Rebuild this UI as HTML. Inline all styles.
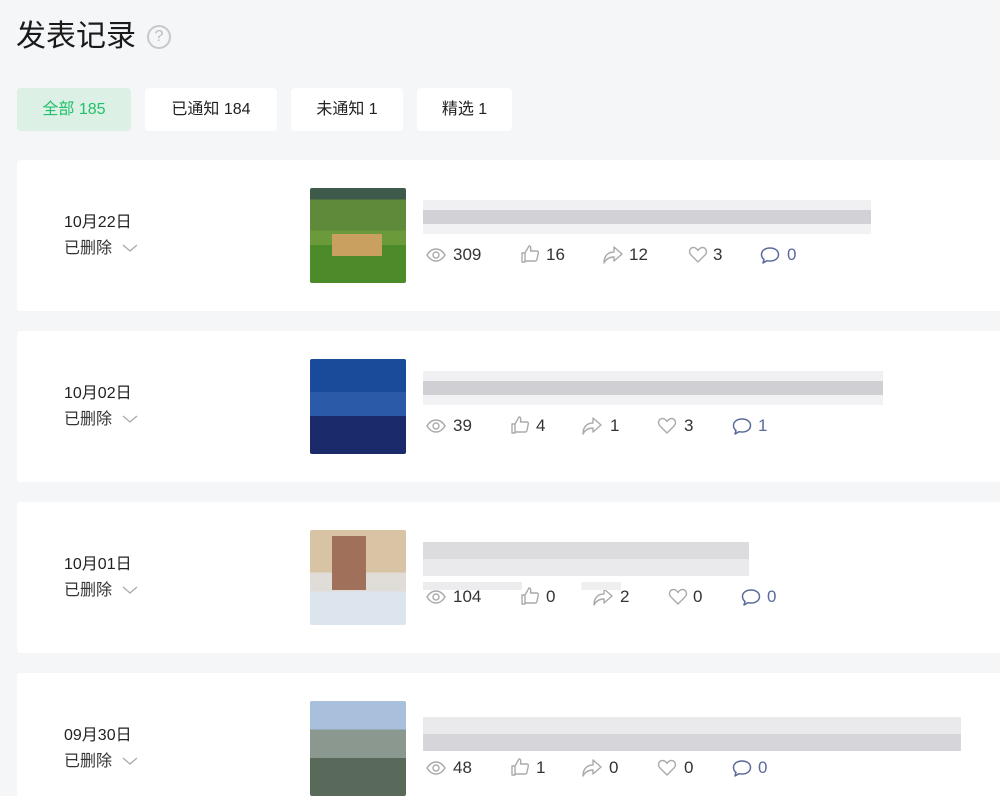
<!DOCTYPE html>
<html><head><meta charset="utf-8"><style>
*{margin:0;padding:0;box-sizing:border-box}
html,body{width:1000px;height:796px;overflow:hidden}
body{background:#f5f6f8;font-family:"Liberation Sans","Noto Sans CJK SC",sans-serif;color:#222;position:relative}
.title{position:absolute;left:16px;top:15px;font-size:30px;color:#1a1a1a;line-height:44px}
.q{position:absolute;left:147px;top:25px;width:24px;height:24px;border:2px solid #c8c8c8;border-radius:50%;color:#bbb;font-size:16px;text-align:center;line-height:20px}
.tab{position:absolute;top:88px;height:43px;background:#fff;border-radius:4px;font-size:16px;line-height:44px;text-align:center;color:#222}
.card{position:absolute;left:17px;width:990px;height:151px;background:#fff;border-radius:4px}
.date{position:absolute;left:47px;font-size:16px;line-height:22px;color:#222}
.del{position:absolute;left:47px;font-size:16px;line-height:22px;color:#333}
.del svg{position:absolute;left:58px;top:5px}
.thumb{position:absolute;left:293px;width:96px;height:95px;border-radius:2px}
.blur{position:absolute;left:406px;height:34px}
.st{position:absolute;font-size:17px;color:#333;line-height:22px}
.ic{position:absolute}
.cm{color:#5a6a9a}
</style></head><body>
<div class="title">发表记录</div><div class="q">?</div>
<div class="tab" style="left:17px;width:114px;background:#dcf0e6;color:#22c069">全部 185</div>
<div class="tab" style="left:145px;width:132px">已通知 184</div>
<div class="tab" style="left:291px;width:112px">未通知 1</div>
<div class="tab" style="left:417px;width:95px">精选 1</div>

<div class="card" style="top:160px">
<div class="date" style="top:52px">10月22日</div>
<div class="del" style="top:78px">已删除<svg width="16" height="10"><path d="M1 2l7 6 7-6" fill="none" stroke="#aaa" stroke-width="1.3"/></svg></div>
<div class="thumb" style="top:28px;background:linear-gradient(#3e5a4a 0 12%,#5e8a3a 12% 45%,#6a9a3a 45% 60%,#4c8a2a 60%)"><div style="position:absolute;left:22px;top:46px;width:50px;height:22px;background:#c9a060"></div></div>
<div class="blur" style="top:40px;width:448px;background:linear-gradient(#f0f0f2 0 30%,#d2d2d6 30% 70%,#f2f2f4 70%)"></div>
</div>
<div class="card" style="top:331px">
<div class="date" style="top:52px">10月02日</div>
<div class="del" style="top:78px">已删除<svg width="16" height="10"><path d="M1 2l7 6 7-6" fill="none" stroke="#aaa" stroke-width="1.3"/></svg></div>
<div class="thumb" style="top:28px;background:linear-gradient(#1a4a9a 0 35%,#2a5aa8 35% 60%,#1a2a6a 60%)"></div>
<div class="blur" style="top:40px;width:460px;background:linear-gradient(#f0f0f2 0 30%,#d0d0d4 30% 70%,#f2f2f4 70%)"></div>
</div>
<div class="card" style="top:502px">
<div class="date" style="top:52px">10月01日</div>
<div class="del" style="top:78px">已删除<svg width="16" height="10"><path d="M1 2l7 6 7-6" fill="none" stroke="#aaa" stroke-width="1.3"/></svg></div>
<div class="thumb" style="top:28px;background:linear-gradient(#d8c4a4 0 45%,#e0dcd8 45% 65%,#dce4ee 65%)"><div style="position:absolute;left:22px;top:6px;width:34px;height:54px;background:#a0705a"></div></div>
<div class="blur" style="top:40px;width:326px;background:linear-gradient(#dcdcde 0 50%,#eaeaec 50%)"></div>
</div>
<div class="card" style="top:673px">
<div class="date" style="top:52px">09月30日</div>
<div class="del" style="top:78px">已删除<svg width="16" height="10"><path d="M1 2l7 6 7-6" fill="none" stroke="#aaa" stroke-width="1.3"/></svg></div>
<div class="thumb" style="top:28px;background:linear-gradient(#a8c0dc 0 30%,#8a9890 30% 60%,#5a6a5a 60%)"></div>
<div class="blur" style="top:44px;width:538px;background:linear-gradient(#eaeaec 0 50%,#d6d6da 50%)"></div>
</div>

<svg width="0" height="0" style="position:absolute"><defs>
<symbol id="eye" viewBox="0 0 20 20"><path d="M1 10c3-5 6-6 9-6s6 1 9 6c-3 5-6 6-9 6s-6-1-9-6z" fill="none" stroke="#aaa" stroke-width="1.4"/><circle cx="10" cy="10" r="3" fill="none" stroke="#aaa" stroke-width="1.4"/></symbol>
<symbol id="like" viewBox="0 0 20 20"><path d="M2 9h3v9H2zM5 9l4-7c2 0 2 2 1.5 5H17c1 0 1.5 1 1.3 2l-1.5 7c-.2.8-.8 1-1.5 1H5" fill="none" stroke="#aaa" stroke-width="1.4" stroke-linejoin="round"/></symbol>
<symbol id="share" viewBox="0 0 20 20"><path d="M11 2l8 7-8 7v-4c-5 0-8 2-10 6 0-6 3-11 10-11z" fill="none" stroke="#aaa" stroke-width="1.4" stroke-linejoin="round"/></symbol>
<symbol id="heart" viewBox="0 0 20 20"><path d="M10 17L3 10C0 7 2 2.5 5.5 2.5c2 0 3.5 1.5 4.5 3 1-1.5 2.5-3 4.5-3C18 2.5 20 7 17 10z" fill="none" stroke="#aaa" stroke-width="1.4" stroke-linejoin="round"/></symbol>
<symbol id="cm" viewBox="0 0 20 20"><path d="M10 3c5 0 8.5 2.7 8.5 6.5S15 16 10 16c-1 0-2 0-3-.3L3 18l1-3.5C2.5 13.3 1.5 11.5 1.5 9.5 1.5 5.7 5 3 10 3z" fill="none" stroke="#5a6a9a" stroke-width="1.5" stroke-linejoin="round"/></symbol>
</defs></svg>

<svg class="ic" style="left:426px;top:245px" width="20" height="20"><use href="#eye"/></svg><div class="st" style="left:453px;top:244px">309</div>
<svg class="ic" style="left:520px;top:244px" width="20" height="20"><use href="#like"/></svg><div class="st" style="left:546px;top:244px">16</div>
<svg class="ic" style="left:603px;top:245px" width="20" height="20"><use href="#share"/></svg><div class="st" style="left:629px;top:244px">12</div>
<svg class="ic" style="left:688px;top:245px" width="20" height="20"><use href="#heart"/></svg><div class="st" style="left:713px;top:244px">3</div>
<svg class="ic" style="left:760px;top:245px" width="20" height="20"><use href="#cm"/></svg><div class="st cm" style="left:787px;top:244px">0</div>

<svg class="ic" style="left:426px;top:416px" width="20" height="20"><use href="#eye"/></svg><div class="st" style="left:453px;top:415px">39</div>
<svg class="ic" style="left:510px;top:415px" width="20" height="20"><use href="#like"/></svg><div class="st" style="left:536px;top:415px">4</div>
<svg class="ic" style="left:582px;top:416px" width="20" height="20"><use href="#share"/></svg><div class="st" style="left:610px;top:415px">1</div>
<svg class="ic" style="left:657px;top:416px" width="20" height="20"><use href="#heart"/></svg><div class="st" style="left:684px;top:415px">3</div>
<svg class="ic" style="left:732px;top:416px" width="20" height="20"><use href="#cm"/></svg><div class="st cm" style="left:758px;top:415px">1</div>

<svg class="ic" style="left:426px;top:587px" width="20" height="20"><use href="#eye"/></svg><div class="st" style="left:453px;top:586px">104</div>
<svg class="ic" style="left:520px;top:586px" width="20" height="20"><use href="#like"/></svg><div class="st" style="left:546px;top:586px">0</div>
<svg class="ic" style="left:593px;top:587px" width="20" height="20"><use href="#share"/></svg><div class="st" style="left:620px;top:586px">2</div>
<svg class="ic" style="left:668px;top:587px" width="20" height="20"><use href="#heart"/></svg><div class="st" style="left:693px;top:586px">0</div>
<svg class="ic" style="left:741px;top:587px" width="20" height="20"><use href="#cm"/></svg><div class="st cm" style="left:767px;top:586px">0</div>
<div style="position:absolute;left:423px;top:582px;width:330px;height:8px;background:linear-gradient(90deg,#ececee 0 30%,transparent 30% 48%,#efefef 48% 60%,transparent 60%)"></div>

<svg class="ic" style="left:426px;top:758px" width="20" height="20"><use href="#eye"/></svg><div class="st" style="left:453px;top:757px">48</div>
<svg class="ic" style="left:510px;top:757px" width="20" height="20"><use href="#like"/></svg><div class="st" style="left:536px;top:757px">1</div>
<svg class="ic" style="left:582px;top:758px" width="20" height="20"><use href="#share"/></svg><div class="st" style="left:609px;top:757px">0</div>
<svg class="ic" style="left:657px;top:758px" width="20" height="20"><use href="#heart"/></svg><div class="st" style="left:684px;top:757px">0</div>
<svg class="ic" style="left:732px;top:758px" width="20" height="20"><use href="#cm"/></svg><div class="st cm" style="left:758px;top:757px">0</div>
</body></html>
